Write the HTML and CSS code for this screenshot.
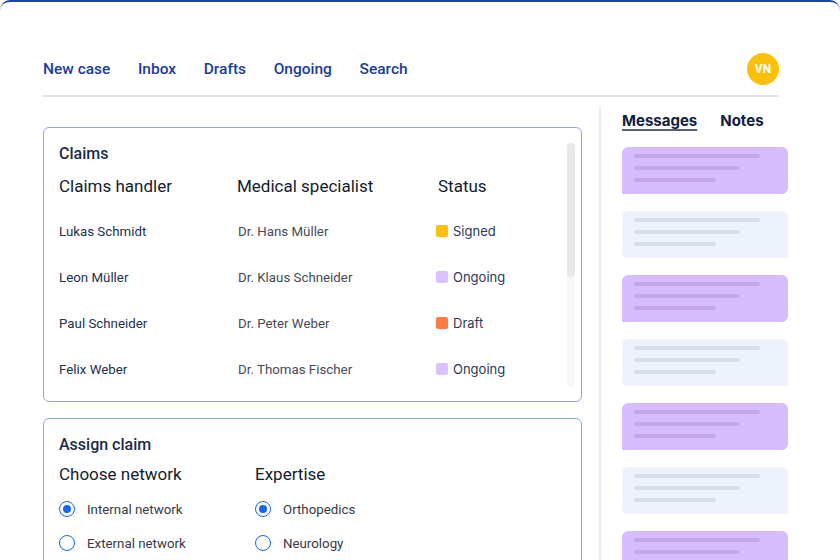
FILE: index.html
```html
<!DOCTYPE html>
<html>
<head>
<meta charset="utf-8">
<link rel="stylesheet" href="styles.css">
</head>
<body>
<div class="frame">
  <header class="topbar">
    <nav class="nav">
      <a>New case</a>
      <a>Inbox</a>
      <a>Drafts</a>
      <a>Ongoing</a>
      <a>Search</a>
    </nav>
    <div class="avatar">VN</div>
  </header>
  <div class="main">
    <div class="left">
      <section class="card claims">
        <h2 class="card-title">Claims</h2>
        <div class="table">
          <div class="th">Claims handler</div>
          <div class="th">Medical specialist</div>
          <div class="th">Status</div>

          <div class="td name">Lukas Schmidt</div>
          <div class="td doc">Dr. Hans Müller</div>
          <div class="td status"><span class="dot yellow"></span>Signed</div>

          <div class="td name">Leon Müller</div>
          <div class="td doc">Dr. Klaus Schneider</div>
          <div class="td status"><span class="dot lilac"></span>Ongoing</div>

          <div class="td name">Paul Schneider</div>
          <div class="td doc">Dr. Peter Weber</div>
          <div class="td status"><span class="dot orange"></span>Draft</div>

          <div class="td name">Felix Weber</div>
          <div class="td doc">Dr. Thomas Fischer</div>
          <div class="td status"><span class="dot lilac"></span>Ongoing</div>
        </div>
        <div class="scrolltrack"><div class="scrollthumb"></div></div>
      </section>
      <section class="card assign">
        <h2 class="card-title">Assign claim</h2>
        <div class="assign-grid">
          <div class="group">
            <div class="th">Choose network</div>
            <label class="radio"><span class="ring on"></span>Internal network</label>
            <label class="radio"><span class="ring"></span>External network</label>
          </div>
          <div class="group">
            <div class="th">Expertise</div>
            <label class="radio"><span class="ring on"></span>Orthopedics</label>
            <label class="radio"><span class="ring"></span>Neurology</label>
          </div>
        </div>
      </section>
    </div>
    <aside class="side">
      <div class="tabs">
        <span class="tab active">Messages</span>
        <span class="tab">Notes</span>
      </div>
      <div class="bubbles">
        <div class="bubble in"><i class="l1"></i><i class="l2"></i><i class="l3"></i></div>
        <div class="bubble out"><i class="l1"></i><i class="l2"></i><i class="l3"></i></div>
        <div class="bubble in"><i class="l1"></i><i class="l2"></i><i class="l3"></i></div>
        <div class="bubble out"><i class="l1"></i><i class="l2"></i><i class="l3"></i></div>
        <div class="bubble in"><i class="l1"></i><i class="l2"></i><i class="l3"></i></div>
        <div class="bubble out"><i class="l1"></i><i class="l2"></i><i class="l3"></i></div>
        <div class="bubble in"><i class="l1"></i><i class="l2"></i><i class="l3"></i></div>
      </div>
    </aside>
  </div>
</div>
</body>
</html>
```
FILE: styles.css
```css
* { box-sizing: border-box; margin: 0; padding: 0; }
html, body { width: 840px; height: 560px; overflow: hidden; background: #fff; }
body { font-family: Roboto, "Liberation Sans", sans-serif; color: #1b2b4b; }

.frame {
  height: 560px;
  border-top: 2px solid #1d43a0;
  border-radius: 10px 10px 0 0;
  padding-top: 51px;
  overflow: hidden;
}

.topbar {
  display: flex;
  align-items: center;
  justify-content: space-between;
  margin: 0 61px 0 43px;
  padding-bottom: 10px;
  border-bottom: 2px solid #e3e3e3;
  box-sizing: content-box;
  height: 32px;
}
.nav { display: flex; gap: 27.6px; }
.nav a {
  font-size: 15.5px;
  font-weight: 500;
  color: #1a3d96;
  line-height: 20px;
}
.avatar {
  width: 32px; height: 32px; border-radius: 50%;
  background: #fbc00b;
  color: #fff;
  font-size: 12px;
  font-weight: 700;
  display: flex; align-items: center; justify-content: center;
}

.main { display: flex; }
.left {
  width: 539px;
  margin-left: 43px;
  padding-top: 30px;
  display: flex;
  flex-direction: column;
  gap: 16px;
}
.card {
  position: relative;
  border: 1px solid #8ba7de;
  border-radius: 6px;
  padding: 16px 15px 9px;
}
.card-title {
  font-size: 16px;
  font-weight: 500;
  line-height: 20px;
  color: #1b2b4b;
}
.th {
  font-size: 17px;
  line-height: 22px;
  color: #141c2c;
  font-weight: 400;
}
.table {
  display: grid;
  grid-template-columns: 178px 199px 1fr;
  margin-top: 11px;
}
.table .th { margin-bottom: 11px; }
.table .th:nth-child(3) { padding-left: 2px; }
.td {
  height: 46px;
  display: flex;
  align-items: center;
  font-size: 13.3px;
}
.name { color: #23314f; }
.doc { color: #454a55; padding-left: 1px; }
.status {
  font-family: Inter, Roboto, sans-serif;
  color: #2c3a5a;
  font-size: 13px;
}
.dot {
  width: 12px; height: 12px; border-radius: 2px;
  margin-right: 5px;
}
.yellow { background: #fbc00b; }
.lilac { background: #d9c2ff; }
.orange { background: #ff7a45; }

.scrolltrack {
  position: absolute;
  top: 15px; right: 6px; bottom: 14px;
  width: 8px;
  background: #f8f8f8;
  border-radius: 4px;
}
.scrollthumb {
  height: 134px;
  background: #e8e8e8;
  border-radius: 4px;
}

.assign { padding-bottom: 20px; }
.assign-grid {
  display: grid;
  grid-template-columns: 196px 1fr;
  margin-top: 8px;
}
.group .th { margin-bottom: 7px; }
.radio {
  display: flex;
  align-items: center;
  height: 34px;
  font-size: 13.3px;
  color: #343a46;
}
.ring {
  width: 16px; height: 16px; border-radius: 50%;
  border: 1.6px solid #1466f0;
  margin-right: 12px;
  display: flex; align-items: center; justify-content: center;
}
.ring.on::after {
  content: "";
  width: 8px; height: 8px; border-radius: 50%;
  background: #1466f0;
}

.side {
  margin-left: 17px;
  margin-top: 9px;
  border-left: 2px solid #ececec;
  padding-left: 21px;
  padding-top: 5px;
  width: 240px;
}
.tabs { display: flex; gap: 23px; }
.tab {
  font-family: Inter, Roboto, sans-serif;
  font-size: 15px;
  font-weight: 700;
  line-height: 20px;
  color: #122042;
}
.tab.active {
  text-decoration: underline;
  text-decoration-thickness: 2px;
  text-underline-offset: 3px;
  text-decoration-color: #5a6478;
}
.bubbles {
  margin-top: 16px;
  display: flex;
  flex-direction: column;
  gap: 17px;
}
.bubble {
  width: 166px;
  height: 47px;
  padding: 7px 12px 0;
  display: flex;
  flex-direction: column;
  gap: 8px;
}
.bubble.in { background: #d8bdfe; border-radius: 6px 6px 6px 0; }
.bubble.out { background: #edf2fd; border-radius: 6px 6px 0 6px; }
.bubble i { display: block; height: 4px; border-radius: 2px; }
.bubble.in i { background: #c4a6ec; }
.bubble.out i { background: #d8dee9; }
.l1 { width: 126px; }
.l2 { width: 106px; }
.l3 { width: 82px; }
```
